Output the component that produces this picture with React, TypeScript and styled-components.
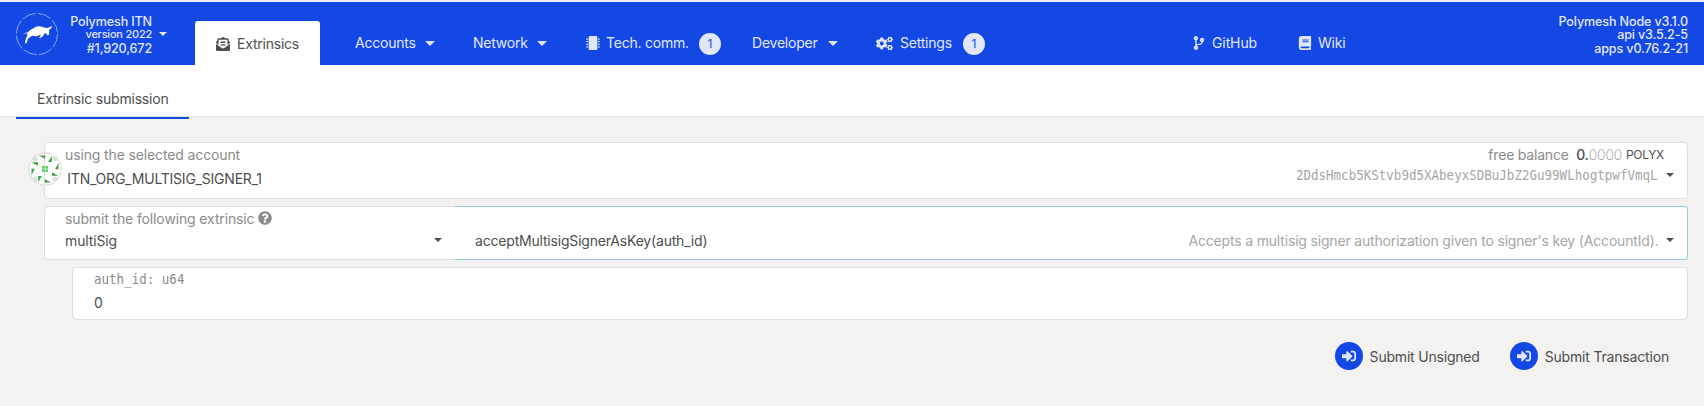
import React from "react";
import styled, { createGlobalStyle } from "styled-components";
import {
  FaEnvelopeOpenText,
  FaMicrochip,
  FaCogs,
  FaCodeBranch,
  FaBook,
  FaQuestionCircle,
  FaSignInAlt,
} from "react-icons/fa";

const blue = "#1348e4";
const navText = "#e1e7fb";

const GlobalStyle = createGlobalStyle`
  * { box-sizing: border-box; }
  body {
    margin: 0;
    background: #f3f2f1;
    font-family: Inter, "Liberation Sans", sans-serif;
    font-size: 14px;
    color: #4e4e4e;
  }
`;

const Page = styled.div`
  display: flex;
  flex-direction: column;
  height: 406px;
  overflow: hidden;
`;

const Header = styled.header`
  display: flex;
  height: 65px;
  flex: none;
  background: ${blue};
  border-top: 2px solid #ececec;
  color: ${navText};
`;

const Brand = styled.div`
  display: flex;
  width: 195px;
  padding: 11px 0 0 16px;
`;

const Lines = styled.div<{ $width: number }>`
  display: flex;
  flex-direction: column;
  align-items: flex-end;
  width: ${(p) => p.$width}px;
  margin-top: 1.5px;
`;

const Line = styled.span<{ $size?: number; $track?: number }>`
  height: 13.5px;
  line-height: 13.5px;
  white-space: nowrap;
  font-size: ${(p) => p.$size ?? 12.6}px;
  letter-spacing: ${(p) => p.$track ?? -0.15}px;
  font-weight: 500;
`;

const Caret = styled.span<{ $size?: number }>`
  flex: none;
  width: 0;
  height: 0;
  border: ${(p) => p.$size ?? 5}px solid transparent;
  border-top-color: currentColor;
  border-bottom: 0;
`;

const BrandCaret = styled(Caret)`
  margin: 19px 0 0 7px;
`;

const Nav = styled.nav`
  display: flex;
  flex: 1;
`;

const NavItem = styled.a<{ $width: number; $before?: number; $active?: boolean }>`
  display: flex;
  flex: none;
  align-items: center;
  width: ${(p) => p.$width}px;
  height: ${(p) => (p.$active ? 44 : 46)}px;
  margin-top: ${(p) => (p.$active ? 19 : 18)}px;
  margin-left: ${(p) => p.$before ?? 0}px;
  padding-left: 21px;
  padding-top: ${(p) => (p.$active ? 2 : 0)}px;
  border-radius: 3px 3px 0 0;
  background: ${(p) => (p.$active ? "#fff" : "transparent")};
  color: ${(p) => (p.$active ? "#4e4e4e" : navText)};
  svg { flex: none; }
`;

const NavLabel = styled.span<{ $width: number; $gap?: number; $track?: number }>`
  flex: none;
  width: ${(p) => p.$width}px;
  margin-left: ${(p) => p.$gap ?? 0}px;
  letter-spacing: ${(p) => p.$track ?? -0.22}px;
  line-height: 20px;
  white-space: nowrap;
`;

const Badge = styled.span`
  width: 22px;
  height: 22px;
  margin-top: 2px;
  border-radius: 50%;
  background: ${navText};
  color: ${blue};
  font-size: 12px;
  line-height: 22px;
  text-align: center;
`;

const Versions = styled(Lines)`
  margin: 12.5px 16px 0 0;
`;

const TabBar = styled.div`
  display: flex;
  flex: none;
  height: 54px;
  padding-left: 16px;
  background: linear-gradient(#fff 51px, #e4e4e4 51px, #e4e4e4 52px, #f3f2f1 52px);
`;

const Tab = styled.div`
  width: 173px;
  height: 54px;
  padding: 24px 0 0 21px;
  border-bottom: 2px solid ${blue};
  line-height: 20px;
  letter-spacing: -0.2px;
  white-space: nowrap;
`;

const Main = styled.main`
  display: flex;
  flex-direction: column;
  gap: 7px;
  padding: 23px 16px 0 44px;
`;

const Card = styled.section<{ $height: number; $indent?: number; $pad?: number }>`
  display: flex;
  justify-content: space-between;
  height: ${(p) => p.$height}px;
  margin-left: ${(p) => p.$indent ?? 0}px;
  padding: 0 0 0 ${(p) => p.$pad ?? 20}px;
  background: #fff;
  border: 1px solid #dededf;
  border-radius: 4px;
  position: relative;
`;

const Split = styled.section`
  display: flex;
  height: 54px;
`;

const Pallet = styled.div`
  width: 411px;
  padding: 0 13px 0 20px;
  background: #fff;
  border: 1px solid #dededf;
  border-right: 0;
  border-radius: 4px 0 0 4px;
`;

const Method = styled.div`
  display: flex;
  flex: 1;
  align-items: center;
  padding: 14px 13px 0 20px;
  background: #fff;
  border: 1px solid #96c8da;
  border-left: 0;
  border-radius: 0 4px 4px 0;
`;

const Avatar = styled.svg`
  position: absolute;
  left: -17px;
  top: 9px;
`;

const Row = styled.div<{ $top?: number; $height?: number }>`
  display: flex;
  align-items: center;
  height: ${(p) => p.$height ?? 20}px;
  margin-top: ${(p) => p.$top ?? 0}px;
  svg { flex: none; }
`;

const Text = styled.span<{ $track?: number; $color?: string; $size?: number; $weight?: number }>`
  white-space: nowrap;
  letter-spacing: ${(p) => p.$track ?? -0.13}px;
  color: ${(p) => p.$color ?? "#4e4e4e"};
  font-size: ${(p) => p.$size ?? 14}px;
  font-weight: ${(p) => p.$weight ?? 400};
`;

const Mono = styled(Text)<{ $origin: string }>`
  display: inline-block;
  font-family: "DejaVu Sans Mono", monospace;
  letter-spacing: 0;
  transform: scaleX(0.894);
  transform-origin: ${(p) => p.$origin};
`;

const Spacer = styled.span`
  flex: 1;
`;

const Balance = styled.div`
  display: flex;
  flex-direction: column;
  align-items: flex-end;
`;

const BalanceRow = styled(Row)`
  margin-right: 23px;
`;

const AddressRow = styled(Row)`
  gap: 8px;
  margin-right: 13px;
`;

const Actions = styled.div`
  display: flex;
  justify-content: flex-end;
  gap: 30px;
  padding: 15px 19px 0 0;
`;

const Action = styled.button`
  display: flex;
  align-items: center;
  gap: 7px;
  padding: 0;
  border: 0;
  background: none;
  font: inherit;
`;

const ActionIcon = styled.span`
  display: flex;
  align-items: center;
  justify-content: center;
  width: 28px;
  height: 28px;
  border-radius: 50%;
  background: ${blue};
  color: ${navText};
`;

const ActionLabel = styled(Text)`
  padding-top: 1px;
`;

const label = "#8b8b8b";
const faint = "#a6a6a6";

const BullLogo = () => (
  <svg width="42" height="42" viewBox="0 0 42 42">
    <circle cx="21" cy="21" r="20.6" fill="none" stroke="#a9bdf6" strokeWidth="0.8" strokeDasharray="14 2.2" />
    <path
      d="M6.8 21.4 Q8.2 19.3 11.6 19.4 Q14 16.6 17.2 15.5 Q20.6 12.2 25.4 13.5 Q27.6 14.6 30.6 14.9 Q34.2 15 36 12.6 Q35.9 15.4 33.6 16.6 Q32.8 17.6 33.2 19 L33 21.8 L31.6 22.4 L30.2 20.4 L28 20.6 L27.6 22.6 L25 24.8 L22.6 25 L24.6 23.2 L24.4 21.8 L20.6 23.2 L16.4 22.8 L13.2 24.8 L11.6 26.4 L10.8 29.8 L9 30.4 L9.8 25.6 L11.4 22.8 L11 20.4 Q8.8 20.2 6.8 21.4Z"
      fill="#fff"
    />
  </svg>
);

const AccountIcon = () => (
  <Avatar width="34" height="34" viewBox="-17 -17 34 34">
    <circle r="16.3" fill="#fff" fillOpacity="0.65" stroke="#d8d8d8" strokeWidth="1" />
    <path d="M-.5 -17V17" stroke="#dededf" />
    {[-10, 10].map((x) => [-10, 10].map((y) => <circle key={`${x}${y}`} cx={x} cy={y} r="2.5" fill="#dedede" />))}
    {[0, 90, 180, 270].map((a) => (
      <g key={a} transform={`rotate(${a})`} fill="#3ba13b">
        <path d="M-6.3 -13.5H.2V-10.2Z" />
        <path d="M6.8 -13.3V-7H3.2Z" />
      </g>
    ))}
    <rect x="-3" y="-3" width="6" height="6" fill="#62cf62" />
    <path d="M-3 0H3M0 -3V3" stroke="#b9edb9" strokeWidth="1" />
  </Avatar>
);

export default function App() {
  return (
    <Page>
      <GlobalStyle />
      <Header>
        <Brand>
          <BullLogo />
          <Lines $width={94}>
            <Line>Polymesh ITN</Line>
            <Line $size={11} $track={-0.22}>version 2022</Line>
            <Line>#1,920,672</Line>
          </Lines>
          <BrandCaret $size={4.5} />
        </Brand>
        <Nav>
          <NavItem $width={125} $active>
            <FaEnvelopeOpenText size={14} />
            <NavLabel $width={62} $gap={7}>Extrinsics</NavLabel>
          </NavItem>
          <NavItem $width={118} $before={14}>
            <NavLabel $width={70}>Accounts</NavLabel>
            <Caret />
          </NavItem>
          <NavItem $width={113}>
            <NavLabel $width={64}>Network</NavLabel>
            <Caret />
          </NavItem>
          <NavItem $width={166}>
            <FaMicrochip size={14} />
            <NavLabel $width={93} $gap={6}>Tech. comm.</NavLabel>
            <Badge>1</Badge>
          </NavItem>
          <NavItem $width={124}>
            <NavLabel $width={76}>Developer</NavLabel>
            <Caret />
          </NavItem>
          <NavItem $width={140}>
            <FaCogs size={17} />
            <NavLabel $width={63} $gap={7}>Settings</NavLabel>
            <Badge>1</Badge>
          </NavItem>
          <NavItem $width={106} $before={176}>
            <FaCodeBranch size={14} />
            <NavLabel $width={48} $gap={6} $track={-0.1}>GitHub</NavLabel>
          </NavItem>
          <NavItem $width={80}>
            <FaBook size={14} />
            <NavLabel $width={30} $gap={6}>Wiki</NavLabel>
          </NavItem>
        </Nav>
        <Versions $width={135}>
          <Line>Polymesh Node v3.1.0</Line>
          <Line>api v3.5.2-5</Line>
          <Line>apps v0.76.2-21</Line>
        </Versions>
      </Header>
      <TabBar>
        <Tab>Extrinsic submission</Tab>
      </TabBar>
      <Main>
        <Card $height={57}>
          <AccountIcon />
          <div>
            <Row $top={1}><Text $color={label}>using the selected account</Text></Row>
            <Row $top={4}><Text $track={-0.22}>&thinsp;ITN_ORG_MULTISIG_SIGNER_1</Text></Row>
          </div>
          <Balance>
            <BalanceRow $top={1}>
              <Text $color={label} $track={-0.2}>free balance&nbsp;&nbsp;</Text>
              <Text $weight={500} $track={-0.2}>0.</Text>
              <Text $color="#8f8f8f" $weight={200} $track={-0.1}>0000&nbsp;</Text>
              <Text $size={12} $track={-0.3}>POLYX</Text>
            </BalanceRow>
            <AddressRow $top={1}>
              <Mono $origin="right" $color={faint}>2DdsHmcb5KStvb9d5XAbeyxSDBuJbZ2Gu99WLhogtpwfVmqL</Mono>
              <Caret $size={4} />
            </AddressRow>
          </Balance>
        </Card>
        <Split>
          <Pallet>
            <Row $top={1}>
              <Text $color={label}>submit the following extrinsic&nbsp;</Text>
              <FaQuestionCircle size={14} color={label} />
            </Row>
            <Row $top={2}>
              <Text>multiSig</Text>
              <Spacer />
              <Caret $size={4} />
            </Row>
          </Pallet>
          <Method>
            <Text $track={-0.19}>acceptMultisigSignerAsKey(auth_id)</Text>
            <Spacer />
            <Text $color={faint} $track={-0.175}>Accepts a multisig signer authorization given to signer's key (AccountId).&nbsp;&nbsp;</Text>
            <Caret $size={4} />
          </Method>
        </Split>
        <Card $height={53} $indent={28} $pad={21}>
          <div>
            <Row $top={1}><Mono $origin="left" $color={label}>auth_id: u64</Mono></Row>
            <Row $top={3}><Text>0</Text></Row>
          </div>
        </Card>
        <Actions>
          <Action>
            <ActionIcon><FaSignInAlt size={14} /></ActionIcon>
            <ActionLabel $track={-0.2}>Submit Unsigned</ActionLabel>
          </Action>
          <Action>
            <ActionIcon><FaSignInAlt size={14} /></ActionIcon>
            <ActionLabel $track={-0.18}>Submit Transaction</ActionLabel>
          </Action>
        </Actions>
      </Main>
    </Page>
  );
}
